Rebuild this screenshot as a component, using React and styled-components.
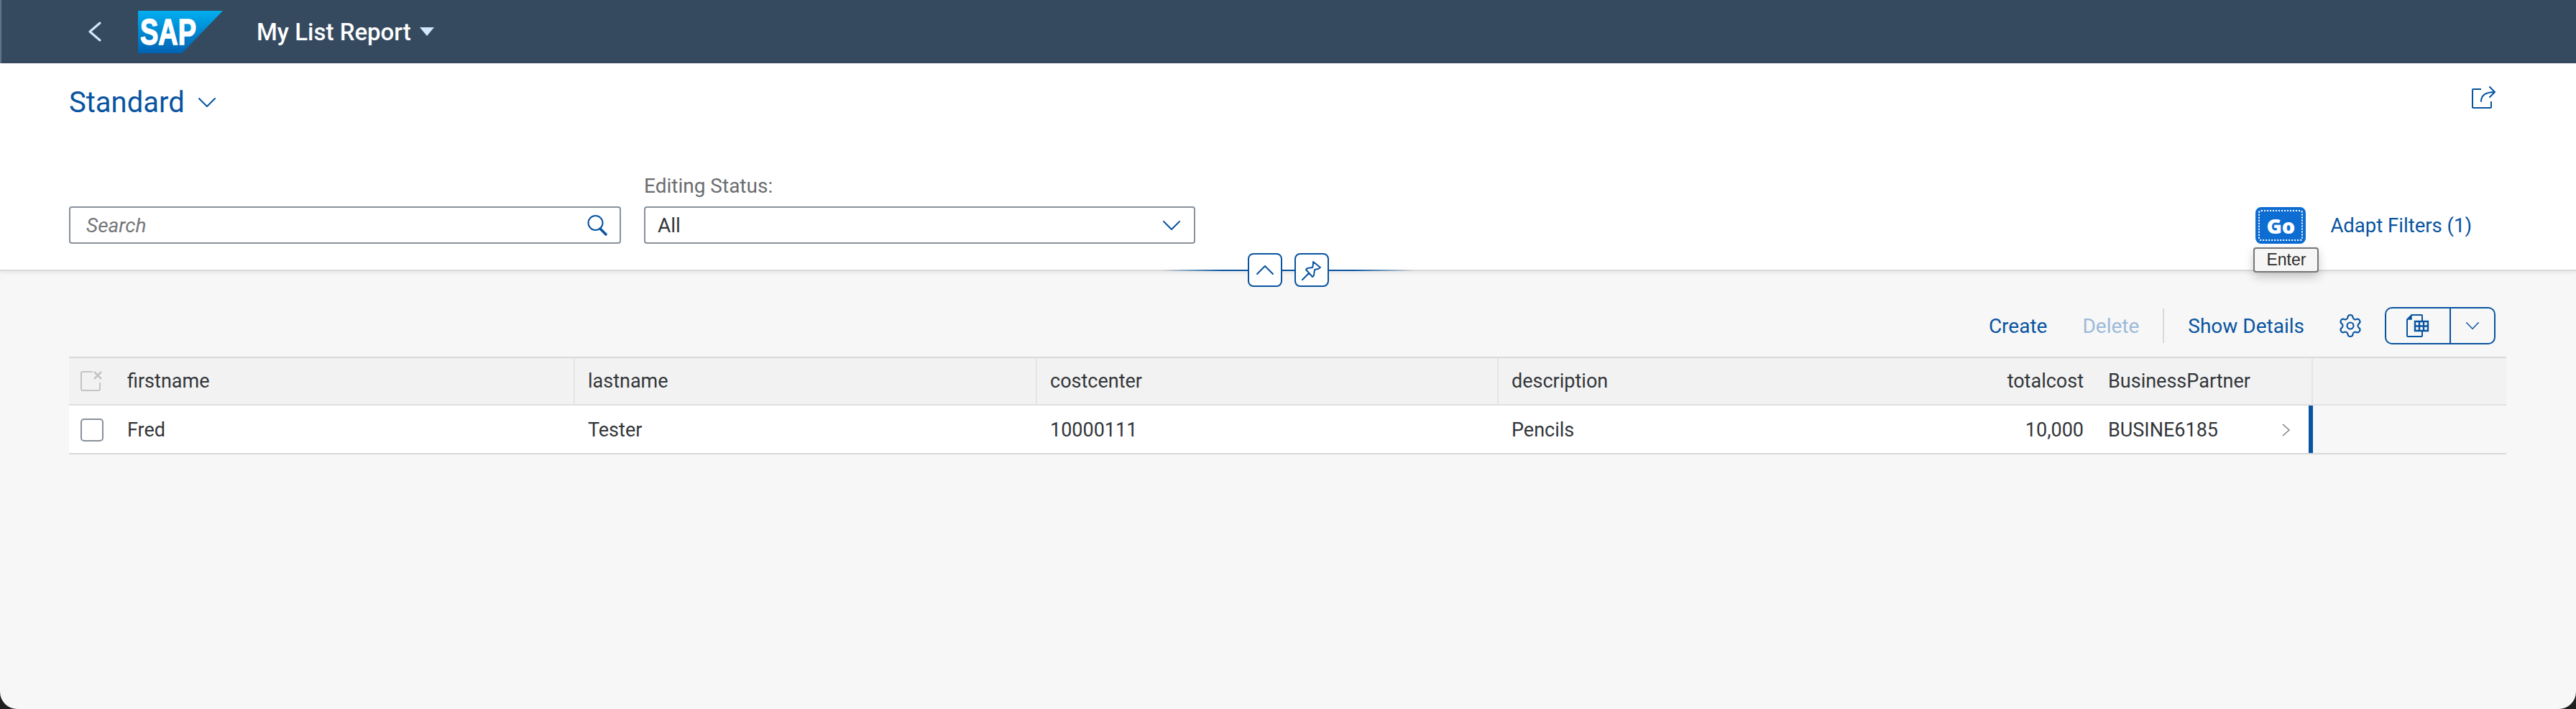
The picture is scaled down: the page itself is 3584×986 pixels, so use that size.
import React from 'react';
import styled, { createGlobalStyle } from 'styled-components';
import { Settings } from 'lucide-react';

const GlobalStyle = createGlobalStyle`
  html, body {
    margin: 0;
    background: #1f1f1f;
  }
  * {
    box-sizing: border-box;
  }
`;

const sapBlue = '#0854a0';
const columns = '64px 640px 643px 642px 642px 188px 303px 1fr';

const Page = styled.div`
  width: 3584px;
  height: 986px;
  display: flex;
  flex-direction: column;
  overflow: hidden;
  background: #f7f7f7;
  border-radius: 0 0 24px 24px;
  font-family: Roboto, "Liberation Sans", sans-serif;
  font-size: 28px;
  color: #32363a;
`;

const ShellBar = styled.header`
  flex: none;
  height: 88px;
  display: flex;
  align-items: center;
  padding-left: 123px;
  background: #354a5f;
  box-shadow: inset 2px 0 0 #62748a;
`;

const LogoWrap = styled.div`
  display: flex;
  margin-left: 51px;
`;

const AppTitle = styled.div`
  margin-left: 47px;
  font-size: 33px;
  font-weight: 500;
  color: #fff;
`;

const TitleCaret = styled.div`
  width: 0;
  height: 0;
  margin-left: 12px;
  border-left: 10px solid transparent;
  border-right: 10px solid transparent;
  border-top: 12px solid #d1e8ff;
`;

const FilterHeader = styled.section`
  position: relative;
  flex: none;
  height: 289px;
  display: flex;
  flex-direction: column;
  justify-content: space-between;
  background: #fff;
  border-bottom: 2px solid #d9d9d9;
  box-shadow: 0 2px 6px rgba(0, 0, 0, 0.08);
`;

const TitleRow = styled.div`
  display: flex;
  justify-content: space-between;
  align-items: flex-start;
  padding: 31px 112px 0 96px;
`;

const VariantTitle = styled.div`
  display: flex;
  align-items: center;
  gap: 19px;
  font-size: 40px;
  line-height: 47px;
  color: ${sapBlue};
`;

const ShareButton = styled.div`
  display: flex;
  margin-top: 1px;
`;

const FilterRow = styled.div`
  display: flex;
  align-items: flex-end;
  gap: 32px;
  padding: 0 145px 36px 96px;
`;

const Field = styled.div`
  display: flex;
  flex-direction: column;
  gap: 12px;
  width: ${(p) => p.$width}px;
`;

const FieldLabel = styled.label`
  font-size: 28px;
  line-height: 32px;
  color: #6a6d70;
`;

const InputBox = styled.div`
  height: 52px;
  display: flex;
  align-items: center;
  justify-content: space-between;
  padding: 0 ${(p) => p.$end}px 0 ${(p) => p.$inset}px;
  background: #fff;
  border: 2px solid #89919a;
  border-radius: 4px;
`;

const Placeholder = styled.span`
  font-style: italic;
  color: #74777a;
`;

const FilterActions = styled.div`
  display: flex;
  align-items: center;
  gap: 34px;
  margin-left: auto;
  font-size: 27.5px;
`;

const GoWrap = styled.div`
  position: relative;
`;

const GoButton = styled.button`
  width: 70px;
  height: 51px;
  padding: 0;
  display: block;
  background: #0e6dd3;
  border: 2px solid #0e6dd3;
  border-radius: 8px;
  outline: 2px dotted #fff;
  outline-offset: -6px;
  font-family: "Open Sans", sans-serif;
  font-size: 29px;
  font-weight: 800;
  color: #fff;
`;

const Tooltip = styled.div`
  position: absolute;
  top: 56px;
  left: -3px;
  width: 91px;
  height: 35px;
  display: flex;
  align-items: center;
  justify-content: center;
  background: #f6f6f6;
  border: 2px solid #767676;
  border-radius: 4px;
  box-shadow: 0 6px 14px rgba(0, 0, 0, 0.2);
  font-family: "Liberation Sans", sans-serif;
  font-size: 23px;
  color: #2b2b2b;
  z-index: 3;
`;

const LinkText = styled.span`
  color: ${(p) => (p.$disabled ? '#9cbad9' : sapBlue)};
`;

const Collapse = styled.div`
  position: absolute;
  left: 50%;
  bottom: -24px;
  width: 352px;
  height: 47px;
  transform: translateX(-50%);
  display: flex;
  justify-content: center;
  gap: 17px;
  z-index: 2;

  &::before {
    content: '';
    position: absolute;
    left: 0;
    right: 0;
    top: 23px;
    height: 2px;
    background: linear-gradient(90deg, transparent, ${sapBlue} 24%, ${sapBlue} 76%, transparent);
  }
`;

const CollapseButton = styled.div`
  position: relative;
  width: 48px;
  height: 47px;
  display: flex;
  align-items: center;
  justify-content: center;
  background: #fff;
  border: 2px solid ${sapBlue};
  border-radius: 8px;
`;

const Content = styled.main`
  flex: 1;
  padding: 50px 97px 0 96px;
`;

const Toolbar = styled.div`
  height: 52px;
  display: flex;
  align-items: center;
  justify-content: flex-end;
  padding-right: 15px;
`;

const ToolbarLink = styled(LinkText)`
  margin-left: ${(p) => p.$gap}px;
`;

const Separator = styled.div`
  width: 2px;
  height: 48px;
  margin-left: 33px;
  background: #d9d9d9;
`;

const GearWrap = styled.div`
  display: flex;
  margin-left: 46px;
  margin-right: 30px;
`;

const SplitButton = styled.div`
  width: 154px;
  height: 52px;
  display: flex;
  border: 2px solid ${sapBlue};
  border-radius: 10px;
`;

const SplitPart = styled.div`
  display: flex;
  align-items: center;
  justify-content: center;
  flex: ${(p) => (p.$main ? '0 0 90px' : '1')};
  border-right: ${(p) => (p.$main ? `2px solid ${sapBlue}` : 'none')};
`;

const Table = styled.div`
  margin-top: 17px;
  font-size: 27px;
`;

const HeaderRow = styled.div`
  display: grid;
  grid-template-columns: ${columns};
  height: 68px;
  background: #f2f2f2;
  border-top: 2px solid #d9d9d9;
  border-bottom: 2px solid #e0e0e0;
`;

const HeaderCell = styled.div`
  display: flex;
  align-items: center;
  justify-content: ${(p) => (p.$end ? 'flex-end' : 'flex-start')};
  padding: 0 16px;
  padding-left: ${(p) => (p.$select ? 16 : p.$first ? 17 : 18)}px;
  border-right: ${(p) => (p.$plain ? 'none' : '2px solid #e5e5e5')};
`;

const DataRow = styled.div`
  display: grid;
  grid-template-columns: ${columns};
  height: 68px;
  border-bottom: 2px solid #d9d9d9;
`;

const DataCell = styled.div`
  display: flex;
  align-items: center;
  justify-content: ${(p) => (p.$end ? 'flex-end' : 'flex-start')};
  padding: 2px 16px 0;
  padding-left: ${(p) => (p.$select ? 16 : p.$first ? 17 : 18)}px;
  background: #fff;
`;

const PartnerCell = styled(DataCell)`
  justify-content: space-between;
  padding-right: 26px;
  border-right: 6px solid ${sapBlue};
`;

const Checkbox = styled.div`
  width: 32px;
  height: 32px;
  background: #fff;
  border: 2px solid #89919a;
  border-radius: 5px;
`;

const SapLogo = () => (
  <svg width="118" height="59" viewBox="0 0 118 59">
    <defs>
      <linearGradient id="sapFill" x1="0" y1="0" x2="0" y2="1">
        <stop offset="0" stopColor="#00aeef" />
        <stop offset="1" stopColor="#0063b4" />
      </linearGradient>
    </defs>
    <polygon points="0,0 118,0 61,59 0,59" fill="url(#sapFill)" />
    <text
      x="3"
      y="47"
      fontFamily="Liberation Sans"
      fontWeight="700"
      fontSize="50"
      fill="#fff"
      stroke="#fff"
      strokeWidth="1.5"
      textLength="78"
      lengthAdjust="spacingAndGlyphs"
    >
      SAP
    </text>
  </svg>
);

const Chevron = ({ w = 24, h = 13, color = sapBlue, up }) => (
  <svg width={w} height={h} viewBox="0 0 24 13" preserveAspectRatio="none">
    <path
      d={up ? 'M1 12 L12 1 L23 12' : 'M1 1 L12 12 L23 1'}
      fill="none"
      stroke={color}
      strokeWidth="2"
      strokeLinecap="round"
    />
  </svg>
);

const BackIcon = () => (
  <svg width="18" height="28" viewBox="0 0 18 28">
    <path d="M16 2 L2 14 L16 26" fill="none" stroke="#d1e8ff" strokeWidth="3" strokeLinecap="round" strokeLinejoin="round" />
  </svg>
);

const ShareIcon = () => (
  <svg width="34" height="32" viewBox="0 0 34 32">
    <path d="M14 4 H3 a1 1 0 0 0 -1 1 V29 a1 1 0 0 0 1 1 H27 a1 1 0 0 0 1 -1 V21" fill="none" stroke={sapBlue} strokeWidth="2" />
    <path d="M14 21 C14 13 20 8 33 8 M26 1 L33 8 L26 15" fill="none" stroke={sapBlue} strokeWidth="2" strokeLinecap="round" />
  </svg>
);

const SearchIcon = () => (
  <svg width="28" height="30" viewBox="0 0 28 30">
    <circle cx="11.5" cy="12" r="10" fill="none" stroke={sapBlue} strokeWidth="2" />
    <path d="M18 20 L26 28" fill="none" stroke={sapBlue} strokeWidth="3.5" strokeLinecap="round" />
  </svg>
);

const PinIcon = () => (
  <svg width="28" height="28" viewBox="0 0 28 28">
    <path
      d="M16 2 L26 10 L23 12 L18 13 L17 21 L15 23 L6 13 L8 11 L15 10 L16 6 Z M10 18 L1 27"
      fill="none"
      stroke={sapBlue}
      strokeWidth="2"
      strokeLinecap="round"
      strokeLinejoin="round"
    />
  </svg>
);

const SheetIcon = () => (
  <svg width="32" height="32" viewBox="0 0 32 32">
    <path d="M7 1 H21 a1 1 0 0 1 1 1 V9 M22 24 V30 a1 1 0 0 1 -1 1 H2 a1 1 0 0 1 -1 -1 V7" fill="none" stroke={sapBlue} strokeWidth="2" />
    <path d="M1 7 L7 1 V7 Z" fill={sapBlue} stroke={sapBlue} strokeWidth="1.5" />
    <path d="M12 10 H30 V23 H12 Z M12 16.5 H30 M18 10 V23 M24 10 V23" fill="#f7f7f7" stroke={sapBlue} strokeWidth="2.4" />
  </svg>
);

const ClearAllIcon = () => (
  <svg width="30" height="28" viewBox="0 0 30 28">
    <path d="M17 1 H3 a2 2 0 0 0 -2 2 V25 a2 2 0 0 0 2 2 H25 a2 2 0 0 0 2 -2 V16" fill="none" stroke="#c4c4c4" strokeWidth="2" />
    <path d="M19 1 L29 11 M29 1 L19 11" fill="none" stroke="#c4c4c4" strokeWidth="2.5" />
  </svg>
);

const RowArrow = () => (
  <svg width="11" height="18" viewBox="0 0 11 18">
    <path d="M1 1 L10 9 L1 17" fill="none" stroke="#7a7d80" strokeWidth="1.5" />
  </svg>
);

export default function App() {
  return (
    <Page>
      <GlobalStyle />
      <ShellBar>
        <BackIcon />
        <LogoWrap>
          <SapLogo />
        </LogoWrap>
        <AppTitle>My List Report</AppTitle>
        <TitleCaret />
      </ShellBar>

      <FilterHeader>
        <TitleRow>
          <VariantTitle>
            Standard
            <Chevron />
          </VariantTitle>
          <ShareButton>
            <ShareIcon />
          </ShareButton>
        </TitleRow>

        <FilterRow>
          <Field $width={768}>
            <InputBox $inset={22} $end={17}>
              <Placeholder>Search</Placeholder>
              <SearchIcon />
            </InputBox>
          </Field>
          <Field $width={767}>
            <FieldLabel>Editing Status:</FieldLabel>
            <InputBox $inset={17} $end={19}>
              All
              <Chevron />
            </InputBox>
          </Field>
          <FilterActions>
            <GoWrap>
              <GoButton>Go</GoButton>
              <Tooltip>Enter</Tooltip>
            </GoWrap>
            <LinkText>Adapt Filters (1)</LinkText>
          </FilterActions>
        </FilterRow>

        <Collapse>
          <CollapseButton>
            <Chevron up />
          </CollapseButton>
          <CollapseButton>
            <PinIcon />
          </CollapseButton>
        </Collapse>
      </FilterHeader>

      <Content>
        <Toolbar>
          <ToolbarLink>Create</ToolbarLink>
          <ToolbarLink $gap={49} $disabled>Delete</ToolbarLink>
          <Separator />
          <ToolbarLink $gap={33}>Show Details</ToolbarLink>
          <GearWrap>
            <Settings size={36} color={sapBlue} strokeWidth={1.4} />
          </GearWrap>
          <SplitButton>
            <SplitPart $main>
              <SheetIcon />
            </SplitPart>
            <SplitPart>
              <Chevron w={18} h={10} />
            </SplitPart>
          </SplitButton>
        </Toolbar>

        <Table>
          <HeaderRow>
            <HeaderCell $select $plain>
              <ClearAllIcon />
            </HeaderCell>
            <HeaderCell $first>firstname</HeaderCell>
            <HeaderCell>lastname</HeaderCell>
            <HeaderCell>costcenter</HeaderCell>
            <HeaderCell $plain>description</HeaderCell>
            <HeaderCell $end $plain>totalcost</HeaderCell>
            <HeaderCell>BusinessPartner</HeaderCell>
            <HeaderCell $plain />
          </HeaderRow>
          <DataRow>
            <DataCell $select>
              <Checkbox />
            </DataCell>
            <DataCell $first>Fred</DataCell>
            <DataCell>Tester</DataCell>
            <DataCell>10000111</DataCell>
            <DataCell>Pencils</DataCell>
            <DataCell $end>10,000</DataCell>
            <PartnerCell>
              BUSINE6185
              <RowArrow />
            </PartnerCell>
            <div />
          </DataRow>
        </Table>
      </Content>
    </Page>
  );
}
